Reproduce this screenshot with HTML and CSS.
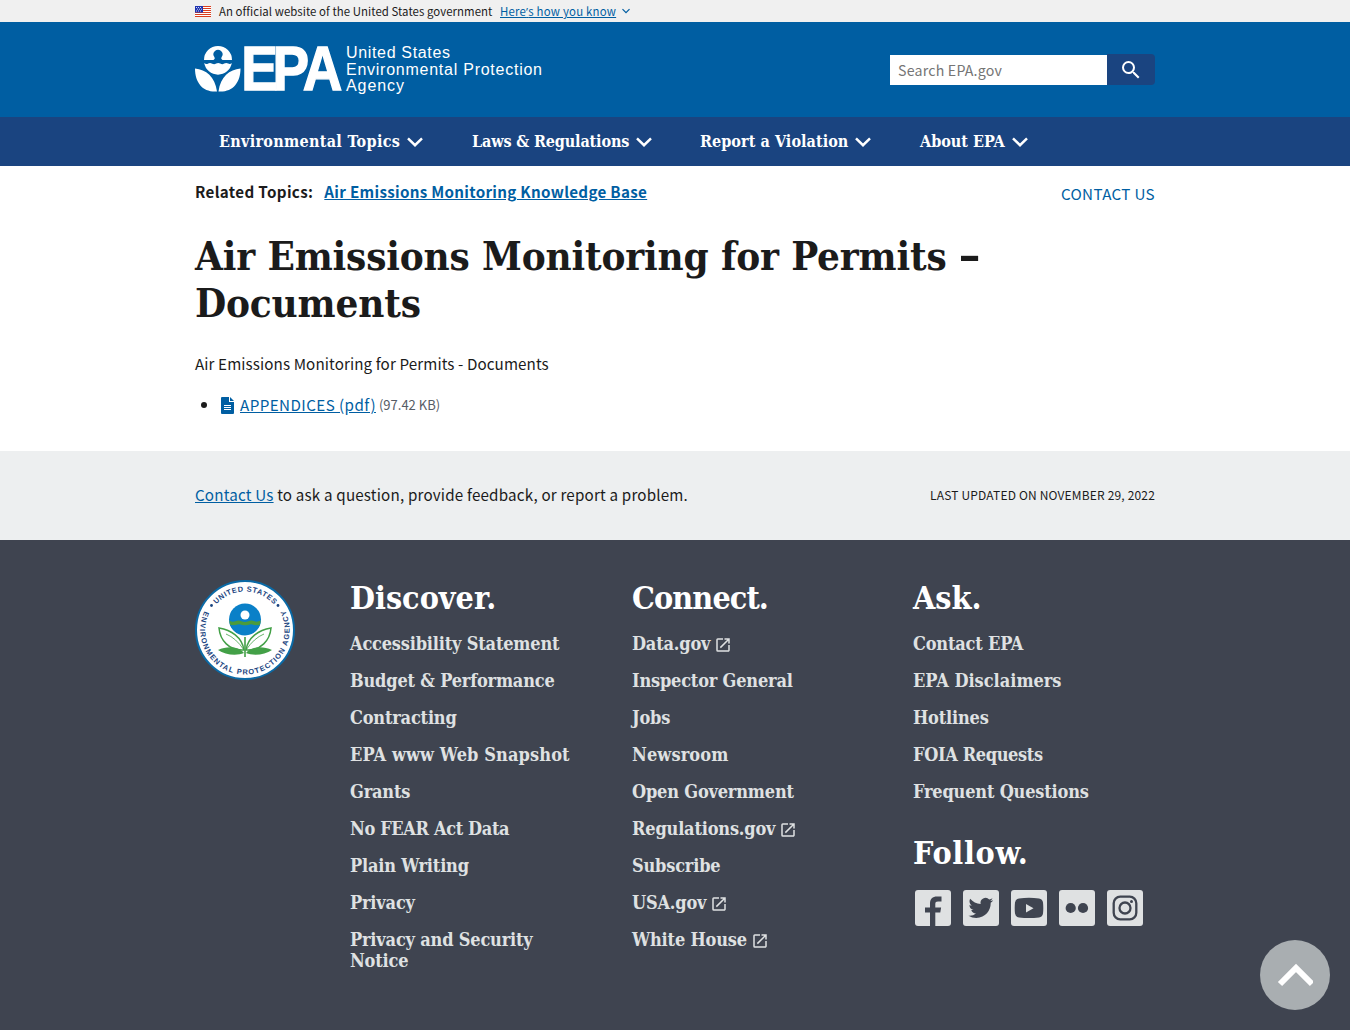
FILE: index.html
```html
<!DOCTYPE html>
<html lang="en">
<head>
<meta charset="utf-8">
<title>Air Emissions Monitoring for Permits - Documents | US EPA</title>
<link rel="stylesheet" href="styles.css">
</head>
<body>
<svg class="defs" width="0" height="0" aria-hidden="true">
  <symbol id="chev" viewBox="0 0 16 10"><path d="M1 1.3 8 8.2l7-6.9" fill="none" stroke="currentColor" stroke-width="2.5"/></symbol>
  <symbol id="ext" viewBox="0 0 24 24"><path fill="currentColor" d="M19 19H5V5h7V3H5a2 2 0 0 0-2 2v14a2 2 0 0 0 2 2h14c1.100 0 2-.9 2-2v-7h-2v7zM14 3v2h3.590l-9.830 9.830 1.410 1.410L19 6.410V10h2V3h-7z"/></symbol>
</svg>
<div class="banner"><div class="wrap">
  <svg class="flag" width="16" height="11" viewBox="0 0 16 11"><path fill="#fff" d="M0 0h16v11H0z"/><path stroke="#db3e1f" d="M0 .5h16M0 2.500h16M0 4.500h16M0 6.500h16M0 8.500h16M0 10.500h16"/><path fill="#1e33b1" d="M0 0h8v6.500H0z"/><path stroke="#fff" stroke-width=".8" stroke-dasharray="1 1" d="M1 1.500h6M2 3.200h5M1 5h6"/></svg>
  <span class="official">An official website of the United States government</span>
  <a class="know" href="#">Here<span class="apos">’</span>s how you know</a>
  <svg class="know-chev" width="8" height="6"><use href="#chev"/></svg>
</div></div>
<header class="header"><div class="wrap">
  <svg class="logo" width="350" height="52" viewBox="0 0 350 52" fill="#fff">
    <path d="M9 14a14 14 0 0 1 28 0h-9.500q-2-1-1-2.800a4.500 4.500 0 1 0-7 0q1 1.800-1 2.800zM9.200 17q2 1.800 4 .4 2-1 4 .3 2 1 4-.2 2-1.200 4 0 2 1.200 4 .1 2-1.400 4 0 2 1 3.600-.6a14 14 0 0 1-27.600 0z"/>
    <path d="M0 22.500c11 1 20 8 22 23C8 46.500 0 37 0 22.500zM45.500 22.500c-11 1-20 8-22 23C37.500 46.500 45.500 37 45.500 22.500z"/>
    <text class="logo-name" transform="translate(46.200 44) scale(.87 1)" dx="0 -6 -2.500">EPA</text>
    <g class="logo-text"><text x="151" y="12.200" textLength="104">United States</text><text x="151" y="28.600" textLength="196">Environmental Protection</text><text x="151" y="45.300" textLength="58">Agency</text></g>
  </svg>
  <form class="search"><input type="text" placeholder="Search EPA.gov"><button type="button" aria-label="Search"><svg width="24" height="24" viewBox="0 0 24 24"><path fill="#fff" d="M15.500 14h-.79l-.28-.27A6.470 6.470 0 0 0 16 9.500 6.500 6.500 0 1 0 9.500 16c1.610 0 3.090-.59 4.230-1.570l.27.28v.79l5 4.990L20.490 19l-4.990-5zm-6 0C7.010 14 5 11.990 5 9.500S7.010 5 9.500 5 14 7.010 14 9.500 11.990 14 9.500 14z"/></svg></button></form>
</div></header>
<nav class="nav"><div class="wrap">
  <a class="n1"><span>Environmental Topics</span><svg width="16" height="10"><use href="#chev"/></svg></a>
  <a class="n2"><span>Laws &amp; Regulations</span><svg width="16" height="10"><use href="#chev"/></svg></a>
  <a class="n3"><span>Report a Violation</span><svg width="16" height="10"><use href="#chev"/></svg></a>
  <a class="n4"><span>About EPA</span><svg width="16" height="10"><use href="#chev"/></svg></a>
</div></nav>
<main class="wrap main">
  <div class="related"><b>Related Topics:</b><a class="topic" href="#">Air Emissions Monitoring Knowledge Base</a><a class="contact">CONTACT US</a></div>
  <h1>Air Emissions Monitoring for Permits <span class="dash">-</span><br>Documents</h1>
  <p class="summary">Air Emissions Monitoring for Permits - Documents</p>
  <ul class="docs"><li><svg width="13" height="17" viewBox="0 0 13 17"><path fill="#005ea2" d="M1 0h7v5h5v11a1 1 0 0 1-1 1H1a1 1 0 0 1-1-1V1a1 1 0 0 1 1-1zM9 0l4 4H9z"/><path stroke="#fff" d="M3 8.500h7M3 10.500h7M3 12.500h7"/></svg><a href="#">APPENDICES (pdf)</a> <span>(97.42 KB)</span></li></ul>
</main>
<section class="feedback"><div class="wrap"><p class="ask"><a href="#">Contact Us</a> to ask a question, provide feedback, or report a problem.</p><p class="updated">LAST UPDATED ON NOVEMBER 29, 2022</p></div></section>
<footer class="footer"><div class="wrap cols">
  <svg class="seal" width="100" height="100" viewBox="0 0 100 100">
    <defs><path id="arcTop" d="M11.500 50a38.500 38.500 0 0 1 77 0"/><path id="arcBottom" d="M16.600 20.200A44.700 44.700 0 1 0 83.400 20.200"/></defs>
    <circle cx="50" cy="50" r="49" fill="#fff" stroke="#0a6aa6" stroke-width="2"/>
    <g class="seal-text"><text><textPath href="#arcTop" startOffset="28" textLength="65">UNITED STATES</textPath></text><text><textPath href="#arcBottom" startOffset="13" textLength="180">ENVIRONMENTAL PROTECTION AGENCY</textPath></text></g>
    <circle cx="16.500" cy="25.500" r="1.400" fill="#1a4480"/><circle cx="83" cy="25.500" r="1.400" fill="#1a4480"/>
    <circle cx="50" cy="39.500" r="16" fill="#0a80c8"/>
    <path fill="#4b9b3c" d="M34.400 40.500q3 2 6 .8 3-1.500 6 0 3.500 1.500 7 0 3-1.500 6 0 3 1 6.200-.8a16 16 0 0 1-1 5H35.400a16 16 0 0 1-1-5z"/><path fill="#0a80c8" d="M35 44.500q3 1.500 6 .4 3-1.200 6 0 3 1.200 6 0 3-1.200 6 0 3 1.100 6-.4A16 16 0 0 1 35 44.500z"/>
    <circle cx="50" cy="35" r="4.500" fill="#fff"/>
    <path fill="#fff" stroke="#43a047" stroke-width="1.500" d="M49 70C47 57 36 50 24 48c1 12 10 23 25 22zM51 70c2-13 13-20 25-22-1 12-10 23-25 22z"/>
    <path fill="#43a047" d="M49 73c-6-7-17-7-26-3 7 5 19 6 26 3zM51 73c6-7 17-7 26-3-7 5-19 6-26 3zM49.200 57h1.600v20h-1.600z"/><path stroke="#43a047" stroke-width=".8" fill="none" d="M49 70Q41 58 31 54M51 70q8-12 18-16"/>
  </svg>
  <div class="col"><h2>Discover.</h2><ul><li>Accessibility Statement</li><li>Budget &amp; Performance</li><li>Contracting</li><li class="wide">EPA www Web Snapshot</li><li>Grants</li><li class="tight">No FEAR Act Data</li><li>Plain Writing</li><li>Privacy</li><li>Privacy and Security<br>Notice</li></ul></div>
  <div class="col"><h2 class="hc">Connect.</h2><ul><li>Data.gov<svg class="ext"><use href="#ext"/></svg></li><li>Inspector General</li><li>Jobs</li><li class="wide">Newsroom</li><li>Open Government</li><li>Regulations.gov<svg class="ext"><use href="#ext"/></svg></li><li>Subscribe</li><li>USA.gov<svg class="ext"><use href="#ext"/></svg></li><li>White House<svg class="ext"><use href="#ext"/></svg></li></ul></div>
  <div class="col"><h2>Ask.</h2><ul><li>Contact EPA</li><li class="even">EPA Disclaimers</li><li>Hotlines</li><li class="tight">FOIA Requests</li><li>Frequent Questions</li></ul>
    <h2 class="follow">Follow.</h2>
    <div class="social">
      <svg viewBox="0 0 36 36"><rect class="tile" width="36" height="36" rx="3"/><path class="ink" d="M15 36V22.500h-5V17.500h5v-3.800C15 9 17.500 6.500 22 6.500h4.500v5H23c-2 0-2.700.8-2.700 2.500v3.500h5.800l-.8 5h-5V36z"/></svg>
      <svg viewBox="0 0 36 36"><rect class="tile" width="36" height="36" rx="3"/><path class="ink" transform="translate(5.500 5.500) scale(1.030)" d="M23.950 4.570a10 10 0 0 1-2.820.77 4.960 4.960 0 0 0 2.160-2.720c-.95.55-2 .96-3.130 1.180a4.920 4.920 0 0 0-8.380 4.480C7.690 8.090 4.070 6.130 1.640 3.160a4.820 4.820 0 0 0-.67 2.480c0 1.710.87 3.210 2.190 4.100a4.900 4.900 0 0 1-2.230-.62v.06a4.920 4.920 0 0 0 3.950 4.830 5 5 0 0 1-2.210.08 4.940 4.940 0 0 0 4.600 3.420A9.870 9.870 0 0 1 0 19.540a14 14 0 0 0 7.550 2.210c9.050 0 14-7.500 14-13.980 0-.21 0-.42-.02-.63a9.900 9.900 0 0 0 2.420-2.570z"/></svg>
      <svg viewBox="0 0 36 36"><rect class="tile" width="36" height="36" rx="3"/><path class="ink" d="M8 8.500q10-1.500 20 0 3.500.5 4 4 .6 5.500 0 11-.5 3.500-4 4-10 1.200-20 0-3.500-.5-4-4-.6-5.500 0-11 .5-3.500 4-4z"/><path class="tile" d="M15 14v8.500l7.500-4.200z"/></svg>
      <svg viewBox="0 0 36 36"><rect class="tile" width="36" height="36" rx="3"/><circle class="ink" cx="11.700" cy="18" r="5.100"/><circle class="ink" cx="24" cy="18" r="5.100"/></svg>
      <svg viewBox="0 0 36 36"><rect class="tile" width="36" height="36" rx="3"/><g fill="none" stroke="#3f4450" stroke-width="2.300"><rect x="6.700" y="6.700" width="22.600" height="22.600" rx="6.500"/><circle cx="18" cy="18" r="5.500"/></g><circle class="ink" cx="24.500" cy="11.500" r="1.500"/></svg>
    </div></div>
</div></footer>
<a class="top" href="#" aria-label="Back to top"><svg width="36" height="24" viewBox="0 0 36 24"><path d="M3 21 19 5l16 16" fill="none" stroke="#fff" stroke-width="6"/></svg></a>
</body>
</html>
```
FILE: styles.css
```css
* { box-sizing: border-box; }
body { margin: 0; height: 1030px; overflow: hidden; display: flex; flex-direction: column; background: #fff; color: #1b1b1b; font: 15.2px/24px "Noto Sans CJK SC", "Noto Sans", sans-serif; }
.defs { position: absolute; }
a { color: #005ea2; }
p, h1, h2, ul { margin: 0; padding: 0; }
.wrap { width: 960px; margin: 0 auto; display: flex; }
.banner { height: 22px; background: #f0f0f0; font-size: 11.4px; line-height: 22px; flex: none; }
.banner .wrap { align-items: center; height: 22px; }
.official { margin-left: 8px; width: 281px; white-space: nowrap; letter-spacing: .06px; }
.know { width: 116px; white-space: nowrap; letter-spacing: .22px; }
.apos { font-family: "Open Sans", sans-serif; line-height: 1; }
.know-chev { color: #005ea2; margin-left: 6px; }
.header { height: 95px; background: #005ea2; flex: none; }
.header .wrap { justify-content: space-between; }
.logo { margin-top: 24px; overflow: visible; }
.logo-name { font: bold 63px "Liberation Sans", Arial, sans-serif; stroke: #fff; stroke-width: 1.4; }
.logo-text { font: 16px "Liberation Sans", Arial, sans-serif; }
.search { margin-top: 33px; display: flex; width: 265px; height: 30px; }
.search input { width: 217px; height: 30px; border: 0; padding: 0 8px; font: 14.2px "Noto Sans CJK SC", "Noto Sans", sans-serif; letter-spacing: .2px; }
.search input::placeholder { color: #757575; }
.search button { width: 48px; height: 31px; margin-top: -1px; border: 0; padding: 0; border-radius: 0 4px 4px 0; background: #1a4480; display: grid; place-items: center; }
.nav { height: 49px; background: #1a4480; flex: none; }
.nav a { display: flex; align-items: center; height: 49px; color: #fff; font: bold 16px/20px "DejaVu Serif Condensed", "DejaVu Serif", serif; font-stretch: condensed; white-space: nowrap; }
.nav svg { margin-left: 7px; }
.nav .n1 { margin-left: 24px; width: 253px; letter-spacing: .3px; }
.nav .n2 { width: 228px; letter-spacing: -.14px; }
.nav .n3 { width: 220px; letter-spacing: .06px; }
.main { display: block; height: 285px; flex: none; }
.related { display: flex; padding-top: 13px; height: 58px; letter-spacing: .34px; }
.topic { margin-left: 11px; font-weight: bold; letter-spacing: .29px; }
.contact { margin-left: auto; padding-top: 2px; text-decoration: none; }
h1 { font: bold 40px/47px "DejaVu Serif Condensed", "DejaVu Serif", serif; font-stretch: condensed; letter-spacing: -.17px; padding-top: 8px; white-space: nowrap; }
.dash { display: inline-block; transform: translate(-1px, -1px) scaleX(1.55); transform-origin: left; }
.summary { margin-top: 25px; line-height: 25px; letter-spacing: .1px; }
.docs { list-style: none; margin-top: 17px; }
.docs li { display: flex; align-items: center; height: 24px; gap: 3px; }
.docs li::before { content: ""; width: 6px; height: 6px; border-radius: 50%; background: #1b1b1b; margin: 0 11px 0 6px; }
.docs a { margin: -3px 0 0 3px; letter-spacing: .42px; }
.docs span { color: #565c65; font-size: 13px; }
.feedback { height: 89px; background: #edeff0; flex: none; }
.feedback .wrap { height: 87px; align-items: center; justify-content: space-between; letter-spacing: .18px; }
.ask { padding-bottom: 2px; }
.updated { font-size: 12px; letter-spacing: .17px; }
.footer { height: 490px; flex: none; background: #3f4450; }
.cols { display: grid; grid-template-columns: 155px 282px 281px 242px; padding-top: 40px; color: #dfe1e2; font: bold 18px/21px "DejaVu Serif Condensed", "DejaVu Serif", serif; font-stretch: condensed; white-space: nowrap; letter-spacing: -.18px; }
.seal-text { font: bold 7.4px "Liberation Sans", Arial, sans-serif; letter-spacing: 0; fill: #1a4480; }
h2 { font-size: 32px; line-height: 36px; color: #fff; font-weight: bold; letter-spacing: 0; }
.hc { letter-spacing: -.9px; }
.col ul { list-style: none; padding-top: 17px; }
.col li { padding-bottom: 16.06px; }
.wide { letter-spacing: .12px; }
.even { letter-spacing: 0; }
.tight { letter-spacing: -.35px; }
.ext { width: 18px; height: 18px; margin-left: 4px; vertical-align: -4px; }
.follow { padding-top: 17px; letter-spacing: .7px; }
.social { display: flex; gap: 12px; padding: 19px 0 0 2px; }
.social svg { width: 36px; height: 36px; }
.tile { fill: #dfe1e2; }
.ink { fill: #3f4450; }
.top { position: fixed; right: 20px; bottom: 20px; width: 70px; height: 70px; border-radius: 50%; background: #a9aeb1; display: grid; place-items: center; }
```
